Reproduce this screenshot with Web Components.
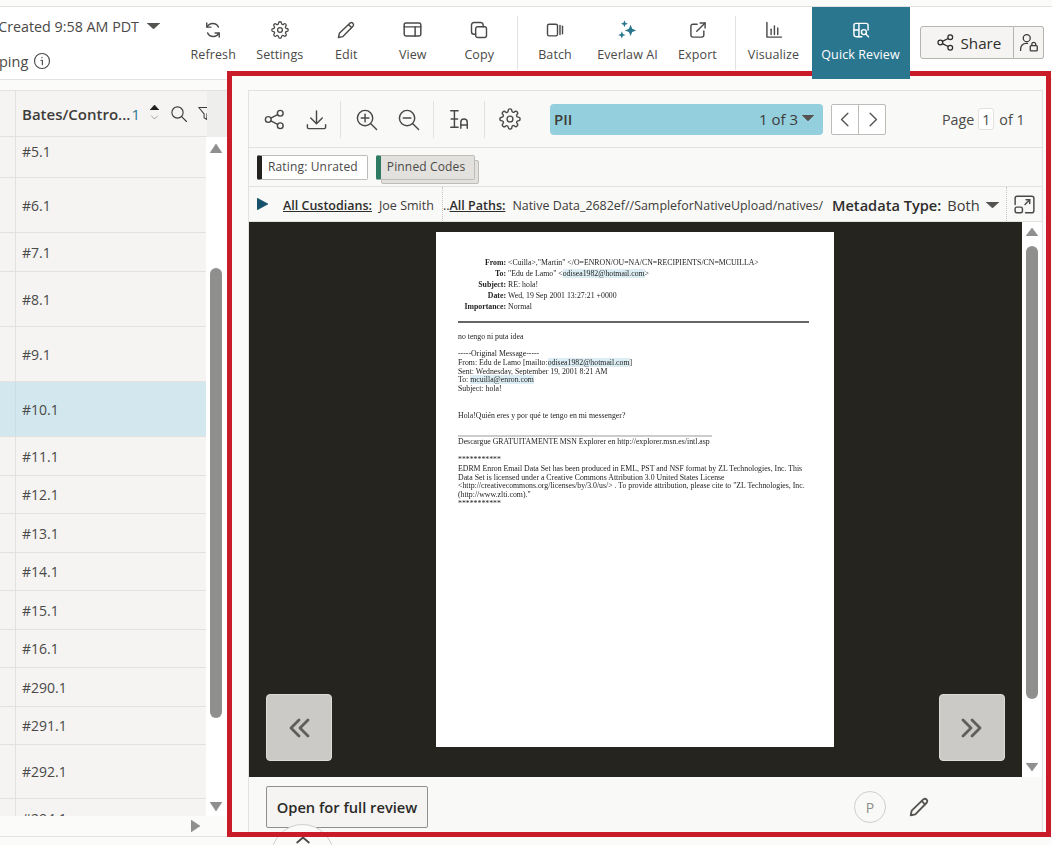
<!DOCTYPE html>
<html>
<head>
<meta charset="utf-8">
<title>Quick Review</title>
<style>
  html, body { margin: 0; height: 845px; overflow: hidden; background: #fbfbfa; }
  body { font-family: "Open Sans", sans-serif; color: #3d3c3a; }
</style>
</head>
<body>
<review-app></review-app>

<script>
const ICONS = {
  refresh: '<path d="M18.5 8.5A7.5 7.5 0 0 0 5 8.2"/><path d="M5.5 15.5A7.5 7.5 0 0 0 19 15.8"/><path d="M4.5 3.5v5h5"/><path d="M19.5 20.5v-5h-5"/>',
  gear: '<circle cx="12" cy="12" r="3.2"/><path d="M19.4 15a1.65 1.65 0 0 0 .33 1.82l.06.06a2 2 0 0 1-2.83 2.83l-.06-.06a1.65 1.65 0 0 0-1.82-.33 1.65 1.65 0 0 0-1 1.51V21a2 2 0 0 1-4 0v-.09A1.65 1.65 0 0 0 9 19.4a1.65 1.65 0 0 0-1.82.33l-.06.06a2 2 0 0 1-2.83-2.83l.06-.06a1.65 1.65 0 0 0 .33-1.82 1.65 1.65 0 0 0-1.51-1H3a2 2 0 0 1 0-4h.09A1.65 1.65 0 0 0 4.6 9a1.65 1.65 0 0 0-.33-1.82l-.06-.06a2 2 0 0 1 2.83-2.83l.06.06a1.65 1.65 0 0 0 1.82.33H9a1.65 1.65 0 0 0 1-1.51V3a2 2 0 0 1 4 0v.09a1.65 1.65 0 0 0 1 1.51 1.65 1.65 0 0 0 1.82-.33l.06-.06a2 2 0 0 1 2.83 2.83l-.06.06a1.65 1.65 0 0 0-.33 1.82V9a1.65 1.65 0 0 0 1.51 1H21a2 2 0 0 1 0 4h-.09a1.65 1.65 0 0 0-1.51 1z"/>',
  pencil: '<path d="M17 3.5a2.6 2.6 0 0 1 3.6 3.6L8 20l-5 1 1-5z"/><path d="M15 5.5l3.6 3.6"/>',
  view: '<rect x="2.5" y="4.5" width="19" height="15" rx="2"/><path d="M2.5 9h19"/><path d="M15 9v10.5"/>',
  copy: '<rect x="8" y="8" width="13" height="13" rx="2.5"/><path d="M17 8V6a3 3 0 0 0-3-3H6a3 3 0 0 0-3 3v8a3 3 0 0 0 3 3h2"/>',
  batch: '<rect x="3" y="5" width="12" height="14" rx="2"/><path d="M18 6.5v11"/><path d="M21 7.5v9"/>',
  spark: '<path fill="currentColor" stroke="none" d="M15.5 6.5l1.9 4.6 4.6 1.9-4.6 1.9-1.9 4.6-1.9-4.6L9 13l4.6-1.9z"/><path fill="currentColor" stroke="none" d="M8.5 1.5l1.1 2.9 2.9 1.1-2.9 1.1-1.1 2.9-1.1-2.9-2.9-1.1 2.9-1.1z"/><path fill="currentColor" stroke="none" d="M5.5 14l1.2 3 3 1.2-3 1.2-1.2 3-1.2-3-3-1.2 3-1.2z"/>',
  export: '<path d="M11 5H6a2.5 2.5 0 0 0-2.5 2.5V18A2.5 2.5 0 0 0 6 20.5h10.5A2.5 2.5 0 0 0 19 18v-5"/><path d="M10.5 13.5L20.5 3.5"/><path d="M14.5 3.5h6v6"/>',
  chart: '<path d="M3.5 3v17.5H21"/><path d="M8.5 11v6.5"/><path d="M12.5 7v10.5"/><path d="M16.5 9.5v8"/>',
  quick: '<path d="M13 20H6a2.5 2.5 0 0 1-2.5-2.5v-11A2.5 2.5 0 0 1 6 4h12a2.5 2.5 0 0 1 2.5 2.5V12"/><path d="M9.5 4v16"/><path d="M3.5 12h6"/><circle cx="15.5" cy="14.5" r="3"/><path d="M18 17l3 3"/>',
  share: '<circle cx="5.5" cy="12" r="3"/><circle cx="18" cy="5.5" r="3"/><circle cx="18" cy="18.5" r="3"/><path d="M8.2 10.6l7.1-3.7"/><path d="M8.2 13.4l7.1 3.7"/>',
  personlock: '<circle cx="10" cy="7" r="4"/><path d="M3 21v-2a6 6 0 0 1 6-6h2"/><rect x="14" y="15.5" width="8" height="6" rx="1"/><path d="M15.8 15.5v-1.5a2.2 2.2 0 0 1 4.4 0v1.5"/>',
  info: '<circle cx="12" cy="12" r="10"/><path d="M10.5 11h2v6"/><path d="M12 7.2v.3"/>',
  download: '<path d="M12 3v13"/><path d="M6 10.5l6 6 6-6"/><path d="M2.5 17.5V20a1.5 1.5 0 0 0 1.5 1.5h16a1.5 1.5 0 0 0 1.5-1.5v-2.5"/>',
  zoomin: '<circle cx="10.5" cy="10.5" r="8"/><path d="M16.5 16.5L22.5 22.5"/><path d="M10.5 6.5v8"/><path d="M6.5 10.5h8"/>',
  zoomout: '<circle cx="10.5" cy="10.5" r="8"/><path d="M16.5 16.5L22.5 22.5"/><path d="M6.5 10.5h8"/>',
  search: '<circle cx="10" cy="10" r="7.5"/><path d="M15.5 15.5L22 22"/>',
  filter: '<path d="M2.5 3.5h19l-7.5 9v8l-4-2.5v-5.5z"/>',
  textsize: '<path d="M3 3h8"/><path d="M7 3v18"/><path d="M3 21h8"/><path d="M3.5 12h7"/><path d="M14 22v-6.5a3.5 3.5 0 0 1 7 0V22"/><path d="M14 18.5h7"/>',
  expand: '<path d="M3 12V6a2 2 0 0 1 2-2h14a2 2 0 0 1 2 2v12a2 2 0 0 1-2 2h-6"/><rect x="3" y="14.5" width="7" height="5.5" rx="1.5"/><path d="M12.5 12l4.5-4.5"/><path d="M13.5 7.5H17v3.5"/>',
  left: '<path d="M15 4l-8 8 8 8"/>',
  right: '<path d="M9 4l8 8-8 8"/>',
  down: '<path d="M4 8l8 8 8-8"/>',
  dleft: '<path d="M12 4l-8 8 8 8"/><path d="M21 4l-8 8 8 8"/>',
  dright: '<path d="M3 4l8 8-8 8"/><path d="M12 4l8 8-8 8"/>',
  up: '<path d="M5 15l7-6 7 6"/>'
};

class SvgIcon extends HTMLElement {
  connectedCallback() {
    let size = this.getAttribute('size') || 20;
    let weight = this.getAttribute('weight') || 1.7;
    let root = this.attachShadow({mode: 'open'});
    root.innerHTML = `
      <style>:host{display:inline-flex;line-height:0;flex:none;}</style>
      <svg width="${size}" height="${size}" viewBox="0 0 24 24" fill="none" stroke="currentColor"
           stroke-width="${weight}" stroke-linecap="round" stroke-linejoin="round">${ICONS[this.getAttribute('name')]}</svg>`;
  }
}
customElements.define('svg-icon', SvgIcon);

class TriMark extends HTMLElement {
  connectedCallback() {
    let dir = this.getAttribute('dir') || 'down';
    let w = this.getAttribute('w') || 13;
    let h = this.getAttribute('h') || 7;
    let col = this.getAttribute('color') || '#55534f';
    let points = {
      down: `0,0 ${w},0 ${w/2},${h}`,
      up: `0,${h} ${w},${h} ${w/2},0`,
      right: `0,0 ${w},${h/2} 0,${h}`
    }[dir];
    this.attachShadow({mode: 'open'}).innerHTML = `
      <style>:host{display:inline-flex;line-height:0;flex:none;}</style>
      <svg width="${w}" height="${h}" viewBox="0 0 ${w} ${h}"><polygon points="${points}" fill="${col}" stroke="${col}" stroke-width="0.6" stroke-linejoin="round"/></svg>`;
  }
}
customElements.define('tri-mark', TriMark);

class ToolButton extends HTMLElement {
  constructor() {
    super();
    this.attachShadow({mode: 'open'}).innerHTML = `
      <style>
        :host { display: flex; flex-direction: column; align-items: center; height: 72px; box-sizing: border-box; padding-top: 12px; color: #4a4947; font-size: 12.5px; white-space: nowrap; letter-spacing: .1px; }
        :host([active]) { background: #2b768f; color: #fff; position: relative; z-index: 4; font-weight: 500; }
        .icon { height: 21px; display: flex; align-items: center; }
        .text { margin-top: 6px; line-height: 17px; }
      </style>
      <div class="icon"><slot name="icon"></slot></div>
      <div class="text"><slot></slot></div>`;
  }
}
customElements.define('tool-button', ToolButton);

class AppToolbar extends HTMLElement {
  constructor() {
    super();
    this.attachShadow({mode: 'open'}).innerHTML = `
      <style>
        :host { display: flex; height: 72px; margin-top: 6px; border-top: 1px solid #e2e2e0; border-bottom: 1px solid #e2e2e0; background: #fff; }
        .info { width: 180px; flex: none; overflow: hidden; display: flex; flex-direction: column; align-items: flex-end; padding-right: 20px; box-sizing: border-box; font-size: 14.3px; color: #4a4947; white-space: nowrap; }
        .created { display: flex; align-items: center; justify-content: flex-end; width: 160px; height: 38px; }
        .created span { flex: none; }
        .created tri-mark { margin-left: 8px; }
        .ping { align-self: flex-start; display: flex; align-items: center; gap: 5px; height: 30px; font-size: 14.5px; margin: 1px 0 0 -1px; }
        .tools { display: flex; flex: none; }
        .sep { width: 1px; background: #e2e2e0; margin: 9px 0; flex: none; }
        .share { display: flex; align-items: flex-start; margin-left: 10px; padding-top: 19px; }
        .share-main { display: flex; align-items: center; gap: 6px; padding-left: 15px; box-sizing: border-box; width: 94px; height: 33px; border: 1px solid #b5b4b1; border-radius: 3px 0 0 3px; background: #f5f4f2; font-size: 15.2px; font-weight: 500; color: #2e2d2b; }
        .share-lock { display: flex; align-items: center; justify-content: center; box-sizing: border-box; width: 30px; height: 33px; border: 1px solid #b5b4b1; border-left: 0; border-radius: 0 3px 3px 0; background: #f5f4f2; color: #3d3c3a; }
      </style>
      <div class="info">
        <div class="created"><span>Created 9:58 AM PDT</span><tri-mark w="13" h="6"></tri-mark></div>
        <div class="ping"><span>ping</span><svg-icon name="info" size="18" weight="1.5"></svg-icon></div>
      </div>
      <div class="tools">
        <tool-button style="width:66.5px"><svg-icon slot="icon" name="refresh"></svg-icon>Refresh</tool-button>
        <tool-button style="width:66.5px"><svg-icon slot="icon" name="gear" size="18"></svg-icon>Settings</tool-button>
        <tool-button style="width:66.5px"><svg-icon slot="icon" name="pencil"></svg-icon>Edit</tool-button>
        <tool-button style="width:66.5px"><svg-icon slot="icon" name="view" size="21"></svg-icon>View</tool-button>
        <tool-button style="width:66.5px"><svg-icon slot="icon" name="copy"></svg-icon>Copy</tool-button>
      </div>
      <div class="sep" style="margin-left:4px"></div>
      <div class="tools">
        <tool-button style="width:75px"><svg-icon slot="icon" name="batch"></svg-icon>Batch</tool-button>
        <tool-button style="width:70px"><svg-icon slot="icon" name="spark" size="21" style="color:#2b768f"></svg-icon>Everlaw AI</tool-button>
        <tool-button style="width:70px"><svg-icon slot="icon" name="export"></svg-icon>Export</tool-button>
      </div>
      <div class="sep" style="margin-left:2px"></div>
      <tool-button style="width:76px"><svg-icon slot="icon" name="chart"></svg-icon>Visualize</tool-button>
      <tool-button active style="width:98px"><svg-icon slot="icon" name="quick"></svg-icon>Quick Review</tool-button>
      <div class="share">
        <div class="share-main"><svg-icon name="share" size="19" weight="1.6"></svg-icon>Share</div>
        <div class="share-lock"><svg-icon name="personlock" size="21" weight="1.5"></svg-icon></div>
      </div>`;
  }
}
customElements.define('app-toolbar', AppToolbar);

class ListRow extends HTMLElement {
  constructor() {
    super();
    this.attachShadow({mode: 'open'}).innerHTML = `
      <style>
        :host { display: flex; box-sizing: border-box; flex: none; background: #f5f4f2; border-bottom: 1px solid #e2e1de; font-size: 14px; color: #4a4947; }
        :host([selected]) { background: #d2e8ee; }
        .stub { width: 15px; border-right: 1px solid #e2e1de; flex: none; }
        :host([selected]) .stub { border-right-color: #c6dfe6; }
        .cell { display: flex; align-items: center; padding: 0 0 var(--cell-pb, 0) 6px; }
      </style>
      <div class="stub"></div>
      <div class="cell"><slot></slot></div>`;
  }
}
customElements.define('list-row', ListRow);

class ResultList extends HTMLElement {
  constructor() {
    super();
    let rows = [
      ['#5.1', 41], ['#6.1', 55], ['#7.1', 39], ['#8.1', 55], ['#9.1', 55], ['#10.1', 55, true],
      ['#11.1', 39], ['#12.1', 38], ['#13.1', 39], ['#14.1', 38], ['#15.1', 39], ['#16.1', 38],
      ['#290.1', 39], ['#291.1', 38], ['#292.1', 54], ['#294.1', 40]
    ];
    let html = rows.map((r, i) => `<list-row ${r[2] ? 'selected' : ''} style="height:${r[1]}px${i == 0 ? ';--cell-pb:12px' : ''}">${r[0]}</list-row>`).join('');
    this.attachShadow({mode: 'open'}).innerHTML = `
      <style>
        :host { display: flex; flex-direction: column; height: 100%; box-sizing: border-box; padding-top: 10px; background: #fbfbfa; border-bottom: 1px solid #e2e2e0; }
        .head { display: flex; height: 47px; flex: none; background: #eeeeed; border-top: 1px solid #e2e2e0; box-sizing: border-box; }
        .hcell { width: 207px; flex: none; box-sizing: border-box; display: flex; background: #f5f4f2; border-bottom: 1px solid #e2e1de; overflow: hidden; }
        .stub { width: 15px; flex: none; border-right: 1px solid #e2e1de; }
        .title { flex: none; padding: 0 0 0 6px; display: flex; align-items: center; font-size: 15px; font-weight: 600; color: #3d3c3a; white-space: nowrap; }
        .title b { font-weight: 400; color: #2b768f; margin-left: 1px; }
        .sort { display: flex; flex-direction: column; align-items: center; gap: 3px; margin-left: 10px; align-self: center; flex: none; color: #8f8e8b; }
        .hcell .find { align-self: center; margin-left: 11px; }
        .hcell .funnel { align-self: center; margin-left: 9px; }
        .body { display: flex; flex: none; background: #fff; }
        .rows { width: 206px; flex: none; height: 679px; overflow: hidden; display: flex; flex-direction: column; }
        .vbar { width: 12px; margin-left: 4px; height: 679px; display: flex; flex-direction: column; align-items: center; flex: none; }
        .vbar .thumb { width: 12px; height: 450px; border-radius: 6px; background: #8f8f8d; margin: 115px 0 84px; flex: none; }
        .hbar { display: flex; justify-content: flex-end; padding: 4px 27px 0 0; height: 20px; box-sizing: border-box; background: #fbfbfa; }
      </style>
      <div class="head">
        <div class="hcell">
          <div class="stub"></div>
          <div class="title">Bates/Contro...<b>1</b></div>
          <div class="sort"><tri-mark dir="up" w="9" h="5" color="#1f1f1e"></tri-mark><svg-icon name="down" size="9" weight="2.2"></svg-icon></div>
          <svg-icon class="find" name="search" size="18" weight="1.5"></svg-icon>
          <svg-icon class="funnel" name="filter" size="17" weight="1.5"></svg-icon>
        </div>
      </div>
      <div class="body">
        <div class="rows">${html}</div>
        <div class="vbar">
          <tri-mark dir="up" w="12" h="9" color="#8f8f8d" style="margin-top:7px"></tri-mark>
          <div class="thumb"></div>
          <tri-mark dir="down" w="12" h="9" color="#8f8f8d"></tri-mark>
        </div>
      </div>
      <div class="hbar"><tri-mark dir="right" w="9" h="12" color="#8f8f8d"></tri-mark></div>`;
  }
}
customElements.define('result-list', ResultList);

class TagChip extends HTMLElement {
  constructor() {
    super();
    this.attachShadow({mode: 'open'}).innerHTML = `
      <style>
        :host { display: inline-flex; align-items: center; box-sizing: border-box; height: 25px; padding: 0 9px 2px 6px; border: 1px solid #bdbcb8; border-left: 5px solid var(--edge, #23221f); border-radius: 2px; background: var(--fill, #fff); font-size: 12px; letter-spacing: .15px; color: #4a4947; position: relative; white-space: nowrap; }
        :host([stacked])::after { content: ""; position: absolute; left: 0; top: 4px; right: -5px; bottom: -5px; border: 1px solid #bdbcb8; background: #e3e1dd; border-radius: 2px; z-index: -1; }
      </style>
      <slot></slot>`;
  }
}
customElements.define('tag-chip', TagChip);

class MetadataBar extends HTMLElement {
  constructor() {
    super();
    this.attachShadow({mode: 'open'}).innerHTML = `
      <style>
        :host { display: flex; align-items: center; height: 35px; flex: none; box-sizing: border-box; border-bottom: 1px solid #e2e2e0; font-size: 12.5px; color: #3d3c3a; white-space: nowrap; }
        .toggle { margin-left: 8px; }
        u { font-weight: 600; color: #2e2d2b; }
        .cust { margin-left: 15px; width: 159px; flex: none; display: flex; gap: 7px; padding-top: 2px; }
        .paths { border-left: 1px dotted #c8c7c4; height: 100%; display: flex; align-items: center; width: 390px; flex: none; box-sizing: border-box; padding-top: 2px; }
        .paths .p { margin-left: 7px; flex: none; font-size: 12.45px; }
        .type { display: flex; align-items: center; font-size: 14.6px; width: 174px; flex: none; box-sizing: border-box; padding-top: 2px; }
        .type b { font-weight: 600; color: #2e2d2b; }
        .type span { margin-left: 6px; }
        .type tri-mark { margin-left: 6px; }
        .pop { border-left: 1px dotted #c8c7c4; height: 100%; flex: 1; display: flex; align-items: center; justify-content: center; color: #4a4947; }
      </style>
      <tri-mark class="toggle" dir="right" w="11" h="12" color="#17506a"></tri-mark>
      <div class="cust"><u>All Custodians:</u><span>Joe Smith</span></div>
      <div class="paths"><span>..</span><u>All Paths:</u><span class="p">Native Data_2682ef//SampleforNativeUpload/natives/</span></div>
      <div class="type"><b>Metadata Type:</b><span>Both</span><tri-mark w="13" h="6"></tri-mark></div>
      <div class="pop"><svg-icon name="expand" size="25" weight="1.4"></svg-icon></div>`;
  }
}
customElements.define('metadata-bar', MetadataBar);

class DocPage extends HTMLElement {
  constructor() {
    super();
    this.attachShadow({mode: 'open'}).innerHTML = `
      <style>
        :host { display: block; box-sizing: border-box; width: 398px; height: 515px; margin-right: 1px; background: #fff; padding: 26px 25px 0 22px; font-family: "Liberation Serif", serif; font-size: 7.8px; line-height: 8.7px; color: #222; filter: blur(.35px); }
        .hdr { display: grid; grid-template-columns: 48px 1fr; column-gap: 2px; line-height: 10.9px; }
        .hdr b { text-align: right; }
        .hdr > div { white-space: nowrap; }
        hr { border: 0; height: 2px; background: #666; margin: 8px 0 0; }
        mark { background: #dceef4; color: inherit; }
        p { margin: 0; white-space: nowrap; }
        .rule { height: 2px; background: #ccc; width: 254px; }
      </style>
      <div class="hdr">
        <b>From:</b><div>&lt;Cuilla&gt;,"Martin" &lt;/O=ENRON/OU=NA/CN=RECIPIENTS/CN=MCUILLA&gt;</div>
        <b>To:</b><div>"Edu de Lamo" &lt;<mark>odisea1982@hotmail.com</mark>&gt;</div>
        <b>Subject:</b><div>RE: hola!</div>
        <b>Date:</b><div>Wed, 19 Sep 2001 13:27:21 +0000</div>
        <b>Importance:</b><div>Normal</div>
      </div>
      <hr>
      <p style="margin-top:10px">no tengo ni puta idea</p>
      <p style="margin-top:9px">-----Original Message-----</p>
      <p>From: Edu de Lamo [mailto:<mark>odisea1982@hotmail.com</mark>]</p>
      <p>Sent: Wednesday, September 19, 2001 8:21 AM</p>
      <p>To: <mark>mcuilla@enron.com</mark></p>
      <p>Subject: hola!</p>
      <p style="margin-top:18px">Hola!Quién eres y por qué te tengo en mi messenger?</p>
      <div class="rule" style="margin-top:15px"></div>
      <p style="margin-top:1px">Descargue GRATUITAMENTE MSN Explorer en http://explorer.msn.es/intl.asp</p>
      <p style="margin-top:9px">***********</p>
      <p>EDRM Enron Email Data Set has been produced in EML, PST and NSF format by ZL Technologies, Inc. This</p>
      <p>Data Set is licensed under a Creative Commons Attribution 3.0 United States License</p>
      <p>&lt;http://creativecommons.org/licenses/by/3.0/us/&gt; . To provide attribution, please cite to "ZL Technologies, Inc.</p>
      <p>(http://www.zlti.com)."</p>
      <p>***********</p>`;
  }
}
customElements.define('doc-page', DocPage);

class DocViewer extends HTMLElement {
  constructor() {
    super();
    this.attachShadow({mode: 'open'}).innerHTML = `
      <style>
        :host { display: flex; flex: none; height: 555px; background: #fff; }
        .stage { width: 773px; flex: none; background: #25241f; position: relative; display: flex; justify-content: center; padding-top: 10px; box-sizing: border-box; }
        .flip { position: absolute; top: 472px; width: 66px; height: 67px; box-sizing: border-box; background: #cbcac7; border: 1px solid #dcdbd8; border-radius: 4px; display: flex; align-items: center; justify-content: center; color: #5f5e5b; }
        .scroll { width: 20px; flex: none; display: flex; flex-direction: column; align-items: center; }
        .thumb { width: 12px; height: 453px; background: #8f8f8d; border-radius: 6px; margin: 10px 0 64px; flex: none; }
      </style>
      <div class="stage">
        <doc-page></doc-page>
        <div class="flip" style="left:17px"><svg-icon name="dleft" size="24" weight="2.8"></svg-icon></div>
        <div class="flip" style="left:690px"><svg-icon name="dright" size="24" weight="2.8"></svg-icon></div>
      </div>
      <div class="scroll">
        <tri-mark dir="up" w="12" h="8" color="#8f8f8d" style="margin-top:6px"></tri-mark>
        <div class="thumb"></div>
        <tri-mark dir="down" w="12" h="8" color="#8f8f8d"></tri-mark>
      </div>`;
  }
}
customElements.define('doc-viewer', DocViewer);

class ReviewPanel extends HTMLElement {
  constructor() {
    super();
    this.attachShadow({mode: 'open'}).innerHTML = `
      <style>
        :host { display: block; box-sizing: border-box; height: 766px; margin-top: -9px; margin-right: 1px; border: 5px solid transparent; background: #fbfbfa padding-box; padding: 14px 4px 0 16px; position: relative; z-index: 1; }
        .card { box-sizing: border-box; height: 742px; border: 1px solid #e2e2e0; border-bottom: 0; background: #f9f9f7; display: flex; flex-direction: column; color: #4a4947; overflow: hidden; }
        .bar { height: 57px; flex: none; box-sizing: border-box; border-bottom: 1px solid #e2e2e0; display: flex; align-items: center; }
        .ic { display: flex; width: 42px; justify-content: center; flex: none; }
        .div { width: 1px; height: 37px; background: #e2e2e0; flex: none; }
        .pii { margin-left: 15px; width: 273px; height: 31px; background: #94cfdd; border-radius: 4px; box-sizing: border-box; display: flex; align-items: center; padding: 0 9px 0 4px; font-size: 15px; color: #3d3c3a; }
        .pii b { font-weight: 600; flex: 1; }
        .pii tri-mark { margin-left: 4px; margin-top: -3px; }
        .nav { margin-left: 8px; display: flex; height: 31px; box-sizing: border-box; border: 1px solid #bdbcb8; border-radius: 2px; background: #fff; }
        .nav div { width: 26px; display: flex; align-items: center; justify-content: center; color: #55534f; }
        .nav div + div { border-left: 1px solid #bdbcb8; }
        .paging { margin-left: 56px; display: flex; align-items: center; font-size: 14.3px; }
        .paging i { font-style: normal; display: inline-flex; align-items: center; justify-content: center; width: 16px; height: 22px; box-sizing: border-box; margin: 0 5px 0 4px; border: 1px solid #e2e1de; border-radius: 3px; background: #fff; font-size: 14px; }
        .tags { height: 39px; flex: none; box-sizing: border-box; border-bottom: 1px solid #e2e2e0; display: flex; align-items: center; gap: 8px; padding: 0 0 0 8px; isolation: isolate; }
        .foot { flex: 1; display: flex; align-items: flex-start; padding: 9px 0 0 17px; }
        .open { box-sizing: border-box; width: 162px; height: 42px; display: flex; align-items: center; justify-content: center; border: 1px solid #8f8f8d; border-radius: 2px; background: #f5f4f2; font-size: 14.7px; font-weight: 600; color: #2a2a28; }
        .p { margin-left: 426px; margin-top: 5px; width: 32px; height: 32px; box-sizing: border-box; border: 1px solid #d0cfcc; border-radius: 50%; display: flex; align-items: center; justify-content: center; font-size: 14px; font-weight: 500; color: #8f8e8b; }
        .pen { margin-left: 22px; margin-top: 10px; color: #55534f; }
      </style>
      <div class="card">
        <div class="bar">
          <div class="ic" style="margin-left:4px"><svg-icon name="share" size="23" weight="1.5"></svg-icon></div>
          <div class="ic"><svg-icon name="download" size="23" weight="1.5"></svg-icon></div>
          <div class="div" style="margin-left:3px"></div>
          <div class="ic" style="margin-left:4px"><svg-icon name="zoomin" size="23" weight="1.5"></svg-icon></div>
          <div class="ic"><svg-icon name="zoomout" size="23" weight="1.5"></svg-icon></div>
          <div class="div" style="margin-left:4px"></div>
          <div class="ic" style="width:50px"><svg-icon name="textsize" size="22" weight="1.6"></svg-icon></div>
          <div class="div"></div>
          <div class="ic" style="width:50px"><svg-icon name="gear" size="22" weight="1.5"></svg-icon></div>
          <div class="pii"><b>PII</b><span>1 of 3</span><tri-mark w="12" h="6"></tri-mark></div>
          <div class="nav"><div><svg-icon name="left" size="19"></svg-icon></div><div><svg-icon name="right" size="19"></svg-icon></div></div>
          <div class="paging">Page<i>1</i>of 1</div>
        </div>
        <div class="tags">
          <tag-chip>Rating: Unrated</tag-chip>
          <tag-chip stacked style="--edge:#2f7a63;--fill:#e3e1dd">Pinned Codes</tag-chip>
        </div>
        <metadata-bar></metadata-bar>
        <doc-viewer></doc-viewer>
        <div class="foot">
          <div class="open">Open for full review</div>
          <div class="p">P</div>
          <div class="pen"><svg-icon name="pencil" size="22" weight="2"></svg-icon></div>
        </div>
      </div>`;
  }
}
customElements.define('review-panel', ReviewPanel);

class ReviewApp extends HTMLElement {
  constructor() {
    super();
    this.attachShadow({mode: 'open'}).innerHTML = `
      <style>
        :host { display: block; height: 845px; position: relative; overflow: hidden; }
        .main { display: grid; grid-template-columns: 227px 1fr; height: 757px; }
        .drawer { position: absolute; z-index: 2; left: 271px; top: 824px; width: 63px; height: 63px; box-sizing: border-box; border: 1px solid #cfcecb; border-radius: 50%; background: #fbfbfa; display: flex; justify-content: center; padding-top: 5px; color: #4a4947; }
        .callout { position: absolute; z-index: 3; left: 227px; top: 71px; width: 824px; height: 766px; box-sizing: border-box; border: 5px solid #c91c28; pointer-events: none; }
      </style>
      <app-toolbar></app-toolbar>
      <div class="main">
        <result-list></result-list>
        <review-panel></review-panel>
      </div>
      <div class="drawer"><svg-icon name="up" size="20" weight="2.2"></svg-icon></div>
      <div class="callout"></div>`;
  }
}
customElements.define('review-app', ReviewApp);
</script>
</body>
</html>
